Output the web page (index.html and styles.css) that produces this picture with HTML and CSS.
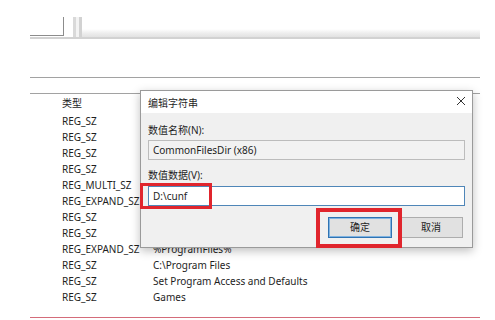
FILE: index.html
```html
<!DOCTYPE html>
<html lang="zh-CN">
<head>
<meta charset="utf-8">
<link rel="stylesheet" href="styles.css">
</head>
<body>
<div class="page">
  <div class="top">
    <div class="corner"></div>
    <div class="split"></div>
    <div class="band"></div>
  </div>
  <div class="tabline"></div>
  <div class="list">
    <div class="row head"><span class="type">类型</span><span class="data"></span></div>
    <div class="row"><span class="type">REG_SZ</span><span class="data"></span></div>
    <div class="row"><span class="type">REG_SZ</span><span class="data"></span></div>
    <div class="row"><span class="type">REG_SZ</span><span class="data"></span></div>
    <div class="row"><span class="type">REG_SZ</span><span class="data"></span></div>
    <div class="row"><span class="type">REG_MULTI_SZ</span><span class="data"></span></div>
    <div class="row"><span class="type">REG_EXPAND_SZ</span><span class="data"></span></div>
    <div class="row"><span class="type">REG_SZ</span><span class="data"></span></div>
    <div class="row"><span class="type">REG_SZ</span><span class="data"></span></div>
    <div class="row"><span class="type">REG_EXPAND_SZ</span><span class="data">%ProgramFiles%</span></div>
    <div class="row"><span class="type">REG_SZ</span><span class="data">C:\Program Files</span></div>
    <div class="row"><span class="type">REG_SZ</span><span class="data">Set Program Access and Defaults</span></div>
    <div class="row"><span class="type">REG_SZ</span><span class="data">Games</span></div>
  </div>
  <div class="redline"></div>

  <div class="dialog">
    <div class="titlebar">
      <span class="title">编辑字符串</span>
      <svg class="close" width="10" height="10" viewBox="0 0 10 10"><path d="M1 1 L9 9 M9 1 L1 9" stroke="#333" stroke-width="1" fill="none"/></svg>
    </div>
    <div class="body">
      <div class="label first">数值名称(N):</div>
      <div class="field readonly">CommonFilesDir (x86)</div>
      <div class="label second">数值数据(V):</div>
      <div class="field active">D:\cunf</div>
      <div class="buttons">
        <div class="btn default">确定</div>
        <div class="btn">取消</div>
      </div>
    </div>
    <div class="mark mark-input"></div>
    <div class="mark mark-btn"></div>
  </div>
</div>
</body>
</html>
```
FILE: styles.css
```css
html, body {
  margin: 0;
  padding: 0;
  background: #ffffff;
}
.page {
  position: relative;
  width: 495px;
  height: 320px;
  overflow: hidden;
  font-family: "Noto Sans", "Noto Sans CJK SC", sans-serif;
  font-size: 10px;
  color: #1e1e1e;
}
.top {
  margin-left: 30px;
  width: 450px;
  height: 37px;
  display: flex;
  border-bottom: 2px solid #d2d2d2;
}
.corner {
  box-sizing: border-box;
  width: 34px;
  height: 19px;
  margin-top: 17px;
  border-right: 1px solid #8c8c8c;
  border-bottom: 1px solid #8c8c8c;
}
.split {
  width: 9px;
  margin-left: 9px;
  margin-top: 17px;
  background: linear-gradient(to right, #d9d9d9 0 3px, #f3f3f3 3px 6px, #d2d2d2 6px 9px);
}
.band {
  flex: 1;
  background: linear-gradient(to bottom, #ffffff 0, #ffffff 29px, #eeeeee 33px, #e2e2e2 37px);
}
.tabline {
  margin: 38px 15px 0 30px;
  border-top: 1px solid #a2a2a2;
}
.list {
  margin: 15px 15px 0 30px;
  border-top: 1px solid #a2a2a2;
}
.row {
  display: grid;
  grid-template-columns: 123px 1fr;
  height: 16px;
  line-height: 16px;
  white-space: nowrap;
}
.row.head {
  height: 19px;
  line-height: 19px;
}
.type {
  padding-left: 32px;
}
.redline {
  margin: 12px 15px 0 30px;
  border-top: 1px solid #d46c7a;
}
.dialog {
  position: absolute;
  left: 140px;
  top: 90px;
  width: 333px;
  height: 158px;
  box-sizing: border-box;
  border: 1px solid #9a9a9a;
  background: #f0f0f0;
  box-shadow: 0 3px 9px rgba(0, 0, 0, 0.25);
  display: flex;
  flex-direction: column;
}
.titlebar {
  height: 22px;
  background: #ffffff;
  display: flex;
  align-items: center;
  justify-content: space-between;
  padding: 0 6px 0 7px;
}
.close {
  margin-top: -2px;
}
.body {
  padding: 10px 7px 0 7px;
  display: flex;
  flex-direction: column;
}
.label {
  height: 14px;
  line-height: 14px;
}
.field {
  box-sizing: border-box;
  height: 20px;
  line-height: 18px;
  padding-left: 4px;
  margin-top: 3px;
}
.field.readonly {
  border: 1px solid #bcbcbc;
  background: #f2f2f2;
}
.label.second {
  margin-top: 8px;
}
.field.active {
  margin-top: 4px;
  border: 1px solid #4f86b8;
  background: #ffffff;
}
.buttons {
  display: flex;
  justify-content: flex-end;
  gap: 7px;
  margin-top: 11px;
  padding-right: 2px;
}
.btn {
  box-sizing: border-box;
  width: 64px;
  height: 21px;
  line-height: 19px;
  text-align: center;
  background: #e1e1e1;
  border: 1px solid #adadad;
}
.btn.default {
  border: 1px solid #2f73b3;
  box-shadow: inset 0 0 0 1px #7eb2e0;
}
.mark {
  position: absolute;
  border: 3px solid #e0252d;
  box-sizing: border-box;
}
.mark-input {
  left: -1px;
  top: 92px;
  width: 72px;
  height: 26px;
}
.mark-btn {
  left: 175px;
  top: 117px;
  width: 86px;
  height: 40px;
  border-width: 4px;
}
```
